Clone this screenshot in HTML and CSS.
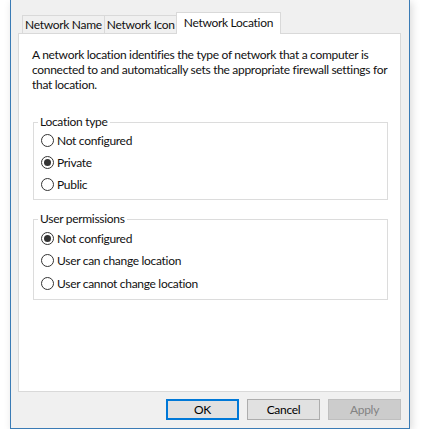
FILE: index.html
```html
<!DOCTYPE html>
<html lang="en">
<head>
    <meta charset="UTF-8">
    <meta name="viewport" content="width=device-width, initial-scale=1.0">
    <title>Network Location</title>
    <link rel="stylesheet" href="styles.css">
</head>
<body>
    <div class="window">
        <div class="tabs">
            <div class="tab">Network Name</div>
            <div class="tab">Network Icon</div>
            <div class="tab active">Network Location</div>
        </div>

        <div class="panel">
            <p class="intro">A network location identifies the type of network that a computer is connected to and automatically sets the appropriate firewall settings for that location.</p>

            <fieldset class="group">
                <legend>Location type</legend>
                <label class="radio"><span class="dot"></span>Not configured</label>
                <label class="radio"><span class="dot checked"></span>Private</label>
                <label class="radio"><span class="dot"></span>Public</label>
            </fieldset>

            <fieldset class="group second">
                <legend>User permissions</legend>
                <label class="radio"><span class="dot checked"></span>Not configured</label>
                <label class="radio"><span class="dot"></span>User can change location</label>
                <label class="radio"><span class="dot"></span>User cannot change location</label>
            </fieldset>
        </div>

        <div class="buttons">
            <button class="btn default">OK</button>
            <button class="btn">Cancel</button>
            <button class="btn disabled">Apply</button>
        </div>
    </div>
</body>
</html>
```

FILE: styles.css
```css
body {
    margin: 0;
    padding: 0;
    background-color: #fff;
    font-family: 'Segoe UI', Lato, sans-serif;
    font-size: 12px;
    letter-spacing: -0.3px;
    color: #111;
}

.window {
    margin-left: 10px;
    width: 400px;
    height: 429px;
    box-sizing: border-box;
    background-color: #f0f0f0;
    border: 1px solid #3a7bb5;
    border-top: none;
    padding: 12px 8px 8px 7px;
    display: flex;
    flex-direction: column;
    box-shadow: 2px 2px 8px rgba(0,0,0,0.15);
}

.tabs {
    display: flex;
    align-items: flex-end;
    padding-left: 4px;
    height: 21px;
    position: relative;
    z-index: 1;
}

.tab {
    height: 18px;
    box-sizing: border-box;
    border: 1px solid #d9d9d9;
    border-bottom: none;
    margin-right: -1px;
    padding: 0 2px;
    line-height: 17px;
    background-color: #f0f0f0;
}

.tab.active {
    height: 22px;
    margin: 0 0 -1px -1px;
    padding: 0 7px;
    line-height: 19px;
    background-color: #fff;
    position: relative;
}

.panel {
    flex: 1;
    background-color: #fff;
    border: 1px solid #d9d9d9;
    padding: 13px 12px 0 14px;
}

.intro {
    margin: 0 0 0 -1px;
    line-height: 15px;
}

.group {
    margin: 23px 0 0 0;
    padding: 0 0 4px 7px;
    border: 1px solid #dcdcdc;
    min-width: 0;
}

.group.second {
    margin-top: 12px;
    padding-top: 1px;
    padding-bottom: 4px;
}

.group legend {
    padding: 0 2px;
    margin-left: -3px;
    line-height: 14px;
}

.radio {
    display: flex;
    align-items: center;
    height: 22px;
}

.group.second .radio {
    height: 22.5px;
}

.dot {
    width: 13px;
    height: 13px;
    box-sizing: border-box;
    border: 1px solid #333;
    border-radius: 50%;
    margin-right: 3px;
    display: flex;
    align-items: center;
    justify-content: center;
}

.dot.checked::after {
    content: "";
    width: 7px;
    height: 7px;
    border-radius: 50%;
    background-color: #333;
}

.buttons {
    display: flex;
    justify-content: flex-end;
    gap: 8px;
    padding-top: 7px;
}

.btn {
    width: 73px;
    height: 21px;
    box-sizing: border-box;
    font-family: inherit;
    font-size: 12px;
    letter-spacing: inherit;
    color: #000;
    background-color: #e1e1e1;
    border: 1px solid #adadad;
    padding: 0;
}

.btn.default {
    border: 2px solid #0078d7;
}

.btn.disabled {
    background-color: #cccccc;
    border-color: #bfbfbf;
    color: #838383;
}
```
